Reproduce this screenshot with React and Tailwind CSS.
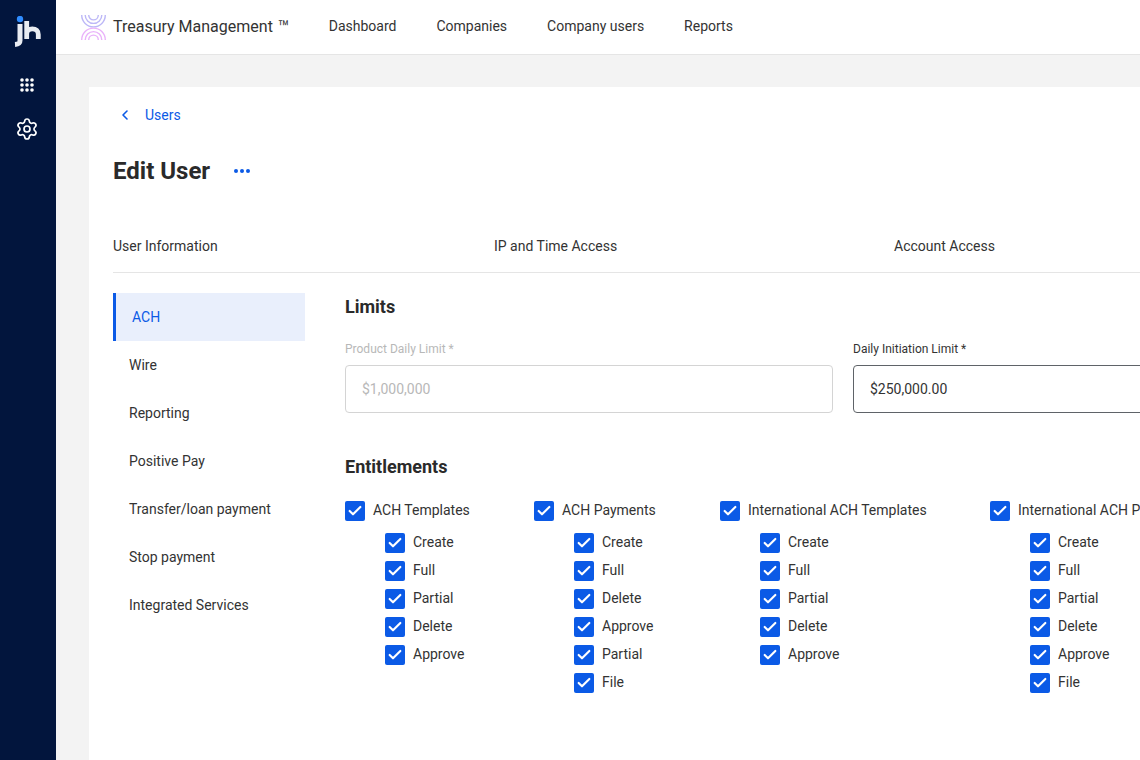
import { Check, ChevronLeft, Settings } from 'lucide-react';

const navLinks = ['Dashboard', 'Companies', 'Company users', 'Reports'];
const sideItems = ['Wire', 'Reporting', 'Positive Pay', 'Transfer/loan payment', 'Stop payment', 'Integrated Services'];

const groups = [
  { title: 'ACH Templates', width: 'w-[189px]', items: ['Create', 'Full', 'Partial', 'Delete', 'Approve'] },
  { title: 'ACH Payments', width: 'w-[186px]', items: ['Create', 'Full', 'Delete', 'Approve', 'Partial', 'File'] },
  { title: 'International ACH Templates', width: 'w-[270px]', items: ['Create', 'Full', 'Partial', 'Delete', 'Approve'] },
  { title: 'International ACH Payments', width: 'w-[270px]', items: ['Create', 'Full', 'Partial', 'Delete', 'Approve', 'File'] },
];

function Box() {
  return (
    <span className="flex h-5 w-5 shrink-0 items-center justify-center rounded-[2px] bg-[#0b5ae6]">
      <Check size={16} strokeWidth={3.2} className="text-white" />
    </span>
  );
}

function CheckRow({ label }) {
  return (
    <div className="flex h-5 items-center gap-2 whitespace-nowrap text-[14px] text-[#333]">
      <Box />
      <span className="mb-[2px]">{label}</span>
    </div>
  );
}

// company mark, drawn with strokes
function JhLogo() {
  return (
    <svg width="28" height="32" viewBox="0 0 28 32" fill="none">
      <circle cx="6" cy="3" r="3.2" fill="#2f8cff" />
      <path d="M6 8V24.500C6 27.300 4.500 28.200 1 28.400" stroke="#e9ecf2" strokeWidth="5" />
      <path d="M12.700 5V23M12.700 18C12.700 14.500 15 12.800 18.300 12.800C22 12.800 24.300 14.800 24.300 18.500V23" stroke="#e9ecf2" strokeWidth="4.800" />
    </svg>
  );
}

function GridDots() {
  const dots = [];
  for (let y = 0; y < 3; y++) {
    for (let x = 0; x < 3; x++) {
      dots.push(<circle key={`${x}-${y}`} cx={2 + x * 5} cy={2 + y * 5} r="1.800" fill="#fff" />);
    }
  }
  return (
    <svg width="14" height="14" viewBox="0 0 14 14">
      {dots}
    </svg>
  );
}

function ProductLogo() {
  return (
    <svg width="25" height="25" viewBox="0 0 25 25" fill="none" strokeWidth="1.400">
      <g stroke="#bdb8f7">
        <path d="M0.700 0C0.700 6.600 6 11.900 12.500 11.900S24.300 6.600 24.300 0" />
        <path d="M4.200 0C4.200 4.600 7.900 8.400 12.500 8.400S20.800 4.600 20.800 0" />
        <path d="M7.700 0C7.700 2.700 9.800 4.900 12.500 4.900S17.300 2.700 17.300 0" />
      </g>
      <g stroke="#e9b2fa">
        <path d="M0.700 25C0.700 18.400 6 13.100 12.500 13.100S24.300 18.400 24.300 25" />
        <path d="M4.200 25C4.200 20.400 7.900 16.600 12.500 16.600S20.800 20.400 20.800 25" />
        <path d="M7.700 25C7.700 22.300 9.800 20.100 12.500 20.100S17.300 22.300 17.300 25" />
      </g>
    </svg>
  );
}

export default function App() {
  return (
    <div className="flex h-[760px] w-[1140px] overflow-hidden bg-[#f3f3f3] font-['Roboto',sans-serif] text-[#333]">
      <aside className="flex w-14 shrink-0 flex-col items-center bg-[#02153d] pt-4">
        <JhLogo />
        <div className="mt-[30px] mr-[2px] flex">
          <GridDots />
        </div>
        <Settings size={24} strokeWidth={1.7} className="mt-[25px] mr-[2px] text-white" />
      </aside>

      <div className="flex min-w-0 flex-1 flex-col">
        <header className="flex h-[55px] shrink-0 items-center border-b border-[#e5e5e5] bg-white pl-[25px]">
          <ProductLogo />
          <span className="ml-[7px] text-[16px] text-[#333]">
            Treasury Management <span className="ml-[1px] align-[-2px] text-[19px] leading-none">™</span>
          </span>
          <nav className="mb-[2px] ml-[39px] flex gap-10 text-[14px]">
            {navLinks.map((link) => (
              <span key={link}>{link}</span>
            ))}
          </nav>
        </header>

        <main className="mt-8 ml-[33px] min-h-0 flex-1 bg-white pl-6">
          <div className="flex h-14 items-center text-[14px] text-[#0b5ae6]">
            <ChevronLeft size={16} strokeWidth={2.4} className="ml-1" />
            <span className="ml-3">Users</span>
          </div>

          <div className="mt-1 flex h-[48px] items-center">
            <h1 className="text-[24px] font-bold text-[#2a2a2a]">Edit User</h1>
            <span className="ml-6 flex gap-[2px]">
              <i className="h-1 w-1 rounded-full bg-[#0b5ae6]" />
              <i className="h-1 w-1 rounded-full bg-[#0b5ae6]" />
              <i className="h-1 w-1 rounded-full bg-[#0b5ae6]" />
            </span>
          </div>

          <div className="mt-7 flex h-[50px] items-center border-b border-[#e5e5e5] pb-[3px] text-[14px] whitespace-nowrap">
            <span className="w-[381px]">User Information</span>
            <span className="w-[400px]">IP and Time Access</span>
            <span>Account Access</span>
          </div>

          <div className="mt-5 flex">
            <ul className="w-[192px] shrink-0 text-[14px]">
              <li className="flex h-12 items-center border-l-[3px] border-[#0b5ae6] bg-[#e9effc] pl-4 text-[#0b5ae6]">ACH</li>
              {sideItems.map((item) => (
                <li key={item} className="flex h-12 items-center pl-4">
                  {item}
                </li>
              ))}
            </ul>

            <section className="ml-10 min-w-0 flex-1">
              <h2 className="text-[18px] leading-7 font-bold text-[#2a2a2a]">Limits</h2>

              <div className="mt-5 flex gap-5">
                <div className="w-[488px] shrink-0">
                  <label className="block text-[12px] leading-4 text-[#b8b8b8]">Product Daily Limit *</label>
                  <div className="mt-2 flex h-12 items-center rounded border border-[#d4d4d4] px-4 text-[14px] text-[#b8b8b8]">
                    $1,000,000
                  </div>
                </div>
                <div className="w-[488px] shrink-0">
                  <label className="block text-[12px] leading-4 text-[#333]">Daily Initiation Limit *</label>
                  <div className="mt-2 flex h-12 items-center rounded border border-[#5f6368] px-4 text-[14px] text-[#333]">
                    $250,000.00
                  </div>
                </div>
              </div>

              <h2 className="mt-10 text-[18px] leading-7 font-bold text-[#2a2a2a]">Entitlements</h2>

              <div className="mt-5 flex">
                {groups.map((group) => (
                  <div key={group.title} className={`${group.width} shrink-0`}>
                    <CheckRow label={group.title} />
                    <div className="mt-3 ml-10 flex flex-col gap-2">
                      {group.items.map((item) => (
                        <CheckRow key={item} label={item} />
                      ))}
                    </div>
                  </div>
                ))}
              </div>
            </section>
          </div>
        </main>
      </div>
    </div>
  );
}
